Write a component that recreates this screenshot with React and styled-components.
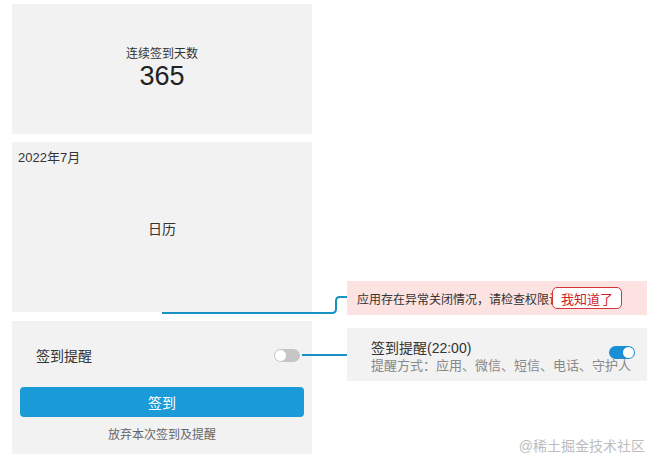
import React from "react"
import styled, { createGlobalStyle } from "styled-components"

const GlobalStyle = createGlobalStyle`
  html, body {
    margin: 0;
    padding: 0;
    background: #fff;
    font-family: "Liberation Sans", "Noto Sans CJK SC", sans-serif;
    color: #333;
  }
`

const Page = styled.div`
  position: relative;
  width: 659px;
  height: 471px;
  padding: 4px 0 0 12px;
  box-sizing: border-box;
  display: flex;
  gap: 35px;
`

const Column = styled.div`
  width: 300px;
  display: flex;
  flex-direction: column;
  padding-top: ${(p) => p.$top || 0}px;
`

const Card = styled.div`
  background: #f2f2f2;
  height: ${(p) => p.$h}px;
  margin-bottom: ${(p) => p.$mb || 0}px;
  box-sizing: border-box;
`

const StreakCard = styled(Card)`
  display: flex;
  flex-direction: column;
  align-items: center;
  justify-content: center;
  padding-bottom: 2px;
`

const StreakLabel = styled.div`
  font-size: 12px;
  line-height: 16px;
`

const StreakCount = styled.div`
  font-size: 27px;
  line-height: 28px;
  color: #222;
`

const CalendarCard = styled(Card)`
  display: flex;
  flex-direction: column;
  padding: 8px 6px;
`

const Month = styled.div`
  font-size: 13px;
  line-height: 16px;
`

const CalendarBody = styled.div`
  flex: 1;
  display: flex;
  align-items: center;
  justify-content: center;
  font-size: 14px;
  padding-bottom: 14px;
`

const SignCard = styled(Card)`
  display: flex;
  flex-direction: column;
  padding: 26px 8px 0;
`

const ReminderRow = styled.div`
  display: flex;
  align-items: center;
  justify-content: space-between;
  padding: 0 4px 0 16px;
  height: 16px;
  font-size: 14px;
`

const Switch = styled.span`
  position: relative;
  width: 26px;
  height: 13px;
  border-radius: 7px;
  background: ${(p) => (p.$on ? "#1a8fd6" : "#c6c6c6")};
  flex: none;
  &::after {
    content: "";
    position: absolute;
    top: 1px;
    ${(p) => (p.$on ? "right: 1px;" : "left: 1px;")}
    width: 11px;
    height: 11px;
    border-radius: 50%;
    background: #fff;
  }
`

const SignButton = styled.button`
  margin-top: 24px;
  height: 30px;
  border: none;
  border-radius: 4px;
  background: #1a9bd7;
  color: #fff;
  font-family: inherit;
  font-size: 14px;
`

const GiveUp = styled.div`
  margin-top: 10px;
  text-align: center;
  font-size: 12px;
  line-height: 16px;
  color: #666;
`

const Toast = styled.div`
  height: 34px;
  margin-bottom: 13px;
  background: #fde2e2;
  display: flex;
  align-items: center;
  padding-left: 10px;
  font-size: 12px;
  white-space: nowrap;
`

const ToastText = styled.span`
  width: 195px;
  overflow: hidden;
  flex: none;
`

const GotIt = styled.span`
  height: 22px;
  width: 70px;
  box-sizing: border-box;
  border: 1px solid #d8343b;
  border-radius: 5px;
  background: #fff;
  color: #d01e26;
  font-size: 13px;
  display: flex;
  align-items: center;
  justify-content: center;
`

const SettingCard = styled(Card)`
  display: flex;
  align-items: center;
  padding: 0 13px 0 24px;
`

const SettingText = styled.div`
  display: flex;
  flex-direction: column;
  margin-top: 5px;
  white-space: nowrap;
  width: 238px;
  flex: none;
`

const SettingTitle = styled.div`
  font-size: 14px;
  line-height: 17px;
`

const SettingSub = styled.div`
  font-size: 13px;
  line-height: 18px;
  color: #888;
`

const SettingSwitch = styled(Switch)`
  margin: -4px 0 0 auto;
`

const Wires = styled.svg`
  position: absolute;
  left: 0;
  top: 0;
  pointer-events: none;
`

const Watermark = styled.div`
  position: absolute;
  right: 14px;
  bottom: 16px;
  font-size: 14px;
  color: #bdbdbd;
`

export default function App() {
  return (
    <>
      <GlobalStyle />
      <Page>
        <Column>
          <StreakCard $h={130} $mb={8}>
            <StreakLabel>连续签到天数</StreakLabel>
            <StreakCount>365</StreakCount>
          </StreakCard>
          <CalendarCard $h={170} $mb={9}>
            <Month>2022年7月</Month>
            <CalendarBody>日历</CalendarBody>
          </CalendarCard>
          <SignCard $h={133}>
            <ReminderRow>
              <span>签到提醒</span>
              <Switch />
            </ReminderRow>
            <SignButton>签到</SignButton>
            <GiveUp>放弃本次签到及提醒</GiveUp>
          </SignCard>
        </Column>
        <Column $top={277}>
          <Toast>
            <ToastText>应用存在异常关闭情况，请检查权限设置</ToastText>
            <GotIt>我知道了</GotIt>
          </Toast>
          <SettingCard $h={53}>
            <SettingText>
              <SettingTitle>签到提醒(22:00)</SettingTitle>
              <SettingSub>提醒方式：应用、微信、短信、电话、守护人</SettingSub>
            </SettingText>
            <SettingSwitch $on />
          </SettingCard>
        </Column>
        <Wires width="659" height="471">
          <path
            d="M162 313 H332 Q336 313 336 309 V301 Q336 297 340 297 H347"
            fill="none"
            stroke="#1591c4"
            strokeWidth="2"
          />
          <path d="M302 355 H347" fill="none" stroke="#1591c4" strokeWidth="2" />
        </Wires>
        <Watermark>@稀土掘金技术社区</Watermark>
      </Page>
    </>
  )
}
